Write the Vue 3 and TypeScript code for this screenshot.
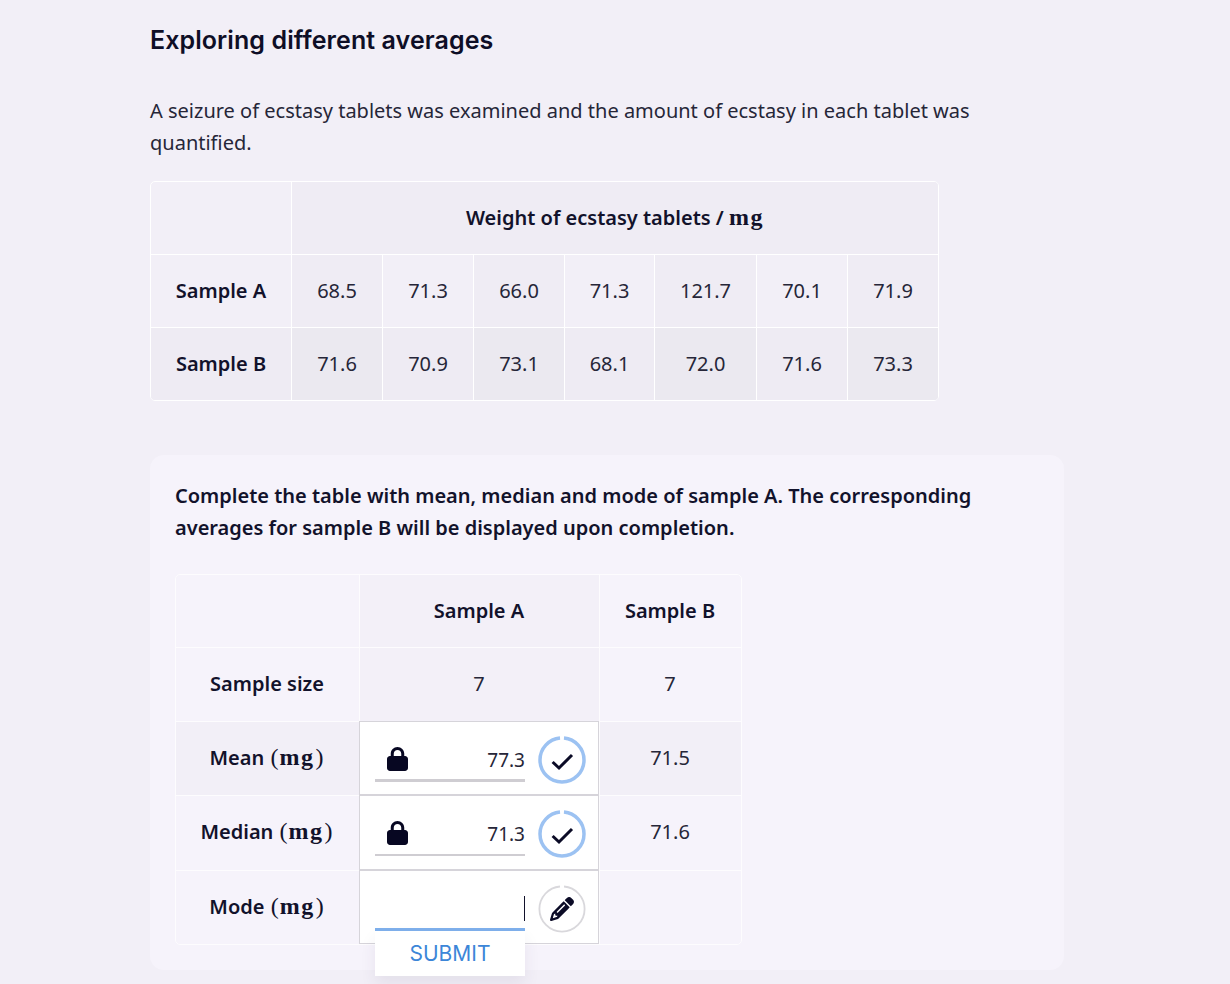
<script setup lang="ts">
const colsA: number[] = [140, 91, 91, 91, 90, 102, 91, 91]
const sampleA: string[] = ['68.5', '71.3', '66.0', '71.3', '121.7', '70.1', '71.9']
const sampleB: string[] = ['71.6', '70.9', '73.1', '68.1', '72.0', '71.6', '73.3']
const colsB: number[] = [183, 240, 142]
const lockPath =
  'M144 144v48H304V144c0-44.2-35.8-80-80-80s-80 35.8-80 80zM80 192V144C80 64.5 144.5 0 224 0s144 64.5 144 144v48h16c35.3 0 64 28.7 64 64V448c0 35.3-28.7 64-64 64H64c-35.3 0-64-28.7-64-64V256c0-35.3 28.7-64 64-64H80z'
const pencilPath =
  'M410.3 231l11.3-11.3-33.9-33.9-62.1-62.1L291.7 89.8l-11.3 11.3-22.6 22.6L58.6 322.9c-10.4 10.4-18 23.3-22.2 37.4L1 480.7c-2.5 8.4-.2 17.5 6.1 23.7s15.3 8.5 23.7 6.1l120.3-35.4c14.1-4.2 27-11.8 37.4-22.2L387.7 253.7 410.3 231zM160 399.4l-9.1 22.7c-4 3.1-8.5 5.4-13.3 6.9L59.4 452l23-78.1c1.4-4.9 3.8-9.4 6.9-13.3l22.7-9.1v32c0 8.8 7.2 16 16 16h32zM362.7 18.7L348.3 33.2 325.7 55.8 314.3 67.1l33.9 33.9 62.1 62.1 33.9 33.9 11.3-11.3 22.6-22.6 14.5-14.5c25-25 25-65.5 0-90.5L453.3 18.7c-25-25-65.5-25-90.5 0zm-47.4 168l-144 144c-6.2 6.2-16.4 6.2-22.6 0s-6.2-16.4 0-22.6l144-144c6.2-6.2 16.4-6.2 22.6 0s6.2 16.4 0 22.6z'
const answered = [
  { label: 'Mean', value: '77.3', other: '71.5', thick: true, rowClass: 'h74 tint' },
  { label: 'Median', value: '71.3', other: '71.6', thick: false, rowClass: 'h75' },
]
</script>

<template>
  <main class="page">
    <h1 class="title">Exploring different averages</h1>
    <p class="intro">
      A seizure of ecstasy tablets was examined and the amount of ecstasy in each tablet was quantified.
    </p>

    <div class="frame clip">
      <table class="grid">
        <colgroup>
          <col v-for="(w, i) in colsA" :key="i" :style="{ width: w + 'px' }" />
        </colgroup>
        <tbody>
          <tr class="h72">
            <th></th>
            <th colspan="7" class="shade">Weight of ecstasy tablets / <span class="math">mg</span></th>
          </tr>
          <tr class="h73">
            <th>Sample A</th>
            <td v-for="(v, i) in sampleA" :key="i" :class="{ shade: i % 2 === 0 }">{{ v }}</td>
          </tr>
          <tr class="h73 tint">
            <th>Sample B</th>
            <td v-for="(v, i) in sampleB" :key="i" :class="{ shade: i % 2 === 0 }">{{ v }}</td>
          </tr>
        </tbody>
      </table>
    </div>

    <section class="card">
      <p class="prompt">
        Complete the table with mean, median and mode of sample A. The corresponding averages for sample B will be
        displayed upon completion.
      </p>

      <div class="frame soft">
        <table class="grid second">
          <colgroup>
            <col v-for="(w, i) in colsB" :key="i" :style="{ width: w + 'px' }" />
          </colgroup>
          <tbody>
            <tr class="h72">
              <th></th>
              <th class="shade">Sample A</th>
              <th>Sample B</th>
            </tr>
            <tr class="h74">
              <th>Sample size</th>
              <td class="shade">7</td>
              <td>7</td>
            </tr>
            <tr v-for="row in answered" :key="row.label" :class="row.rowClass">
              <th>{{ row.label }} <span class="paren">(</span><span class="math">mg</span><span class="paren">)</span></th>
              <td class="input-cell">
                <div class="input-wrap">
                  <div class="field" :class="{ thick: row.thick }">
                    <svg class="lock" viewBox="0 0 448 512" aria-hidden="true"><path :d="lockPath" /></svg>
                    <span class="value">{{ row.value }}</span>
                  </div>
                  <svg class="status" viewBox="0 0 48 48" aria-hidden="true">
                    <circle class="ring-done" cx="24" cy="24" r="22" pathLength="100" stroke-dasharray="97 3" stroke-dashoffset="-1.5" transform="rotate(-90 24 24)" />
                    <path class="tick" d="M14.6 26l6.4 6 13-13" />
                  </svg>
                </div>
              </td>
              <td>{{ row.other }}</td>
            </tr>
            <tr class="h74">
              <th>Mode <span class="paren">(</span><span class="math">mg</span><span class="paren">)</span></th>
              <td class="input-cell">
                <div class="input-wrap">
                  <div class="field active">
                    <span class="caret"></span>
                    <button class="submit" type="button">SUBMIT</button>
                  </div>
                  <svg class="status" viewBox="0 0 48 48" aria-hidden="true">
                    <circle class="ring-idle" cx="24" cy="24" r="22.6" pathLength="100" stroke-dasharray="97 3" stroke-dashoffset="-1.5" transform="rotate(-90 24 24)" />
                    <svg x="12" y="12" width="24" height="24" viewBox="0 0 512 512"><path class="pencil" :d="pencilPath" /></svg>
                  </svg>
                </div>
              </td>
              <td></td>
            </tr>
          </tbody>
        </table>
      </div>
    </section>
  </main>
</template>

<style>
html,
body {
  margin: 0;
  background: #f2eff7;
}
</style>

<style scoped>
.page {
  box-sizing: border-box;
  width: 1230px;
  height: 984px;
  padding: 24px 0 0 150px;
  overflow: hidden;
  background: #f2eff7;
  color: #12122b;
  font-family: 'Noto Sans', sans-serif;
}
.title {
  margin: 0 0 39px;
  font-family: Inter, sans-serif;
  font-size: 25px;
  line-height: 32px;
  font-weight: 600;
  letter-spacing: 0.08px;
  color: #0e0e26;
}
.intro {
  margin: 0 0 22px;
  max-width: 850px;
  font-size: 20px;
  line-height: 32px;
  color: #262638;
}
.frame {
  width: fit-content;
  border: 1px solid #fff;
  border-radius: 5px;
}
.clip {
  overflow: hidden;
}
.soft {
  border-color: #fdfcfe;
}
.grid {
  border-collapse: separate;
  border-spacing: 0;
  table-layout: fixed;
  font-size: 20px;
  line-height: 26px;
}
.grid th,
.grid td {
  padding: 0;
  border-left: 1px solid #fff;
  border-top: 1px solid #fff;
  text-align: center;
  vertical-align: middle;
  font-weight: 400;
  color: #262638;
}
.grid th {
  font-weight: 600;
  color: #12122b;
}
.grid tr > :first-child {
  border-left: 0;
}
.grid tr:first-child > * {
  border-top: 0;
}
.h72 {
  height: 72px;
}
.h73 {
  height: 73px;
}
.h74 {
  height: 74px;
}
.h75 {
  height: 75px;
}
.shade {
  background: #efecf4;
}
.tint {
  background: #eeebf3;
}
.tint .shade {
  background: #ebe9f0;
}
.math {
  font-family: 'Liberation Serif', serif;
  font-weight: 700;
  font-size: 24px;
  letter-spacing: 1.5px;
  line-height: 1;
}
.paren {
  font-family: 'Liberation Serif', serif;
  font-weight: 400;
  font-size: 24px;
  line-height: 1;
  margin: 0 1px;
}
.card {
  box-sizing: border-box;
  width: 914px;
  height: 515px;
  margin-top: 54px;
  padding: 25px;
  border-radius: 14px;
  background: #f6f3fb;
}
.prompt {
  margin: 0 0 30px;
  max-width: 820px;
  font-size: 20px;
  line-height: 32px;
  font-weight: 600;
  color: #12122b;
}
.second th,
.second td {
  padding-right: 1px;
  border-color: #fdfcfe;
}
.second tr:not(:first-child) > * {
  padding-bottom: 2px;
}
.second .shade {
  background: #f3f0f8;
}
.second .tint {
  background: #f2eff7;
}
.second .input-cell.input-cell {
  padding: 0 0 0 0;
  background: #fff;
  border: 1px solid #d6d4da;
  vertical-align: top;
}
.input-wrap {
  position: relative;
  display: flex;
  align-items: flex-start;
  padding-left: 15px;
}
.field {
  position: relative;
  display: flex;
  align-items: flex-start;
  justify-content: space-between;
  box-sizing: border-box;
  width: 150px;
  height: 60px;
  padding: 25px 0 0 12px;
  border-bottom: 2px solid #cfcdd2;
  font-size: 19px;
  line-height: 26px;
}
.field.thick {
  border-bottom-width: 3px;
}
.field.active {
  border-bottom: 3px solid #7fb0ec;
}
.lock {
  width: 21px;
  height: 24px;
  fill: #070722;
}
.value {
  color: #262638;
}
.status {
  flex: none;
  width: 48px;
  height: 48px;
  margin: 14px 0 0 13px;
  fill: none;
}
.ring-done {
  fill: none;
  stroke: #9cc2f2;
  stroke-width: 3.5;
}
.ring-idle {
  fill: #fff;
  stroke: #d9d8dc;
  stroke-width: 1.8;
}
.tick {
  stroke: #0b0b26;
  stroke-width: 3;
  fill: none;
}
.pencil {
  fill: #0b0b26;
}
.caret {
  position: absolute;
  right: 0;
  top: 25px;
  width: 1.5px;
  height: 25px;
  background: #12122b;
}
.submit {
  position: absolute;
  left: 0;
  top: calc(100% + 3px);
  width: 150px;
  height: 45px;
  padding: 0;
  border: 0;
  background: #fff;
  box-shadow: 0 8px 16px rgba(60, 50, 90, 0.08);
  color: #3c86d8;
  font-family: Inter, sans-serif;
  font-size: 21px;
  font-weight: 400;
}
</style>
